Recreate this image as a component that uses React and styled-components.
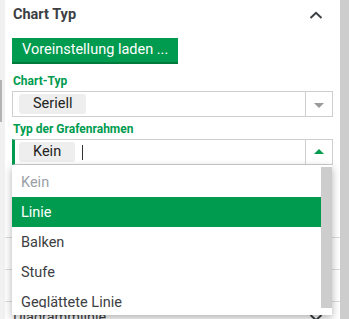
import React from "react";
import styled, { createGlobalStyle, css } from "styled-components";

const GREEN = "#009b4f";

const GlobalStyle = createGlobalStyle`
  html, body {
    margin: 0;
    padding: 0;
    background: #f1f1f1;
    font-family: Roboto, "Noto Sans", Arial, sans-serif;
  }
`;

const options = ["Kein", "Linie", "Balken", "Stufe", "Geglättete Linie"];
const sections = ["Achsen", "Legende", "Diagrammlinie"];

const Chevron = ({ up = true, color = "#3c4043" }) => (
  <svg width="14" height="8" viewBox="0 0 14 8">
    <path
      d={up ? "M1.5 7 L7 1.8 L12.5 7" : "M1.5 1 L7 6.2 L12.5 1"}
      fill="none"
      stroke={color}
      strokeWidth="2"
    />
  </svg>
);

export default function App() {
  return (
    <>
      <GlobalStyle />
      <Page>
        <Edge>
          <Handle />
        </Edge>
        <Panel>
          <Header>
            <Title>Chart Typ</Title>
            <Chevron up />
          </Header>
          <Body>
            <PresetButton>Voreinstellung laden ...</PresetButton>
            <Label>Chart-Typ</Label>
            <Select>
              <Value>
                <Chip>Seriell</Chip>
              </Value>
              <ArrowBox>
                <Triangle />
              </ArrowBox>
            </Select>
            <Label second>Typ der Grafenrahmen</Label>
            <Select focused>
              <Value>
                <Chip>Kein</Chip>
                <Caret />
              </Value>
              <ArrowBox>
                <Triangle up />
              </ArrowBox>
            </Select>
          </Body>
          {sections.map((s) => (
            <Section key={s}>
              <SectionTitle>{s}</SectionTitle>
              <Chevron up={false} />
            </Section>
          ))}

          <Menu>
            <MenuList>
              {options.map((o, i) => (
                <MenuItem key={o} muted={i === 0} active={i === 1}>
                  {o}
                </MenuItem>
              ))}
            </MenuList>
            <MenuTrack />
          </Menu>
        </Panel>
        <PageScroll />
      </Page>
    </>
  );
}

const Page = styled.div`
  display: flex;
  width: 349px;
  height: 319px;
  overflow: hidden;
`;

const Edge = styled.div`
  width: 5px;
  background: #f1f1f1;
  padding-top: 80px;
  box-sizing: border-box;
`;

const Handle = styled.div`
  width: 2px;
  height: 42px;
  background: #b3b3b3;
`;

const Panel = styled.div`
  position: relative;
  flex: 1;
  background: #fff;
`;

const PageScroll = styled.div`
  width: 9px;
  background: #cdcdcd;
`;

const Header = styled.div`
  display: flex;
  align-items: center;
  justify-content: space-between;
  height: 32px;
  padding: 0 17px 3px 8px;
  box-sizing: border-box;
`;

const Title = styled.div`
  font-size: 14.5px;
  font-weight: 700;
  color: #3c4043;
`;

const Body = styled.div`
  display: flex;
  flex-direction: column;
  align-items: flex-start;
  padding: 6px 7px 72px 7px;
`;

const PresetButton = styled.button`
  height: 26px;
  padding: 0 10px;
  border: none;
  border-bottom: 2px solid #00793d;
  background: ${GREEN};
  color: #fff;
  font-family: inherit;
  font-size: 14.5px;
  line-height: 24px;
  cursor: pointer;
`;

const Label = styled.div`
  margin: ${({ second }) => (second ? "5px 0 3px 1px" : "10px 0 3px 1px")};
  font-size: 12px;
  line-height: 14px;
  font-weight: 700;
  color: ${GREEN};
`;

const Select = styled.div`
  display: flex;
  align-self: stretch;
  height: 26px;
  box-sizing: border-box;
  border: 1px solid #cfcfcf;
  ${({ focused }) =>
    focused &&
    css`
      border-left: 3px solid ${GREEN};
      & > div:first-child {
        padding-left: 4px;
      }
    `}
`;

const Value = styled.div`
  flex: 1;
  display: flex;
  align-items: center;
  padding-left: 6px;
  gap: 7px;
`;

const Chip = styled.span`
  height: 20px;
  padding: 0 14px;
  border-radius: 3px;
  background: #eeeeee;
  color: #222;
  font-size: 14.5px;
  line-height: 20px;
`;

const Caret = styled.span`
  width: 1px;
  height: 15px;
  background: #333;
`;

const ArrowBox = styled.div`
  width: 26px;
  border-left: 1px solid #cfcfcf;
  display: flex;
  align-items: center;
  justify-content: center;
`;

const Triangle = styled.span`
  width: 0;
  height: 0;
  border-left: 5px solid transparent;
  border-right: 5px solid transparent;
  ${({ up }) =>
    up
      ? css`
          border-bottom: 5px solid ${GREEN};
          margin-top: -1px;
        `
      : css`
          border-top: 5px solid #9a9a9a;
          margin-top: 2px;
        `}
`;

const Section = styled.div`
  display: flex;
  align-items: center;
  justify-content: space-between;
  height: 32px;
  padding: 0 17px 0 8px;
  border-top: 1px solid #dcdcdc;
  box-sizing: border-box;
`;

const SectionTitle = styled.div`
  font-size: 14.5px;
  color: #3c4043;
`;

const Menu = styled.div`
  position: absolute;
  top: 165px;
  left: 7px;
  width: 320px;
  height: 150px;
  padding-bottom: 7px;
  box-sizing: border-box;
  display: flex;
  background: #fff;
  box-shadow: 0 3px 8px rgba(0, 0, 0, 0.3);
`;

const MenuList = styled.div`
  flex: 1;
  overflow: hidden;
  padding-top: 2px;
`;

const MenuItem = styled.div`
  height: 30px;
  padding-left: 9px;
  display: flex;
  align-items: center;
  font-size: 14.5px;
  white-space: nowrap;
  color: ${({ muted }) => (muted ? "#9aa0a6" : "#3c4043")};
  ${({ active }) =>
    active &&
    css`
      background: ${GREEN};
      color: #fff;
    `}
`;

const MenuTrack = styled.div`
  width: 11px;
  margin-top: 2px;
  background: #cdcdcd;
`;
